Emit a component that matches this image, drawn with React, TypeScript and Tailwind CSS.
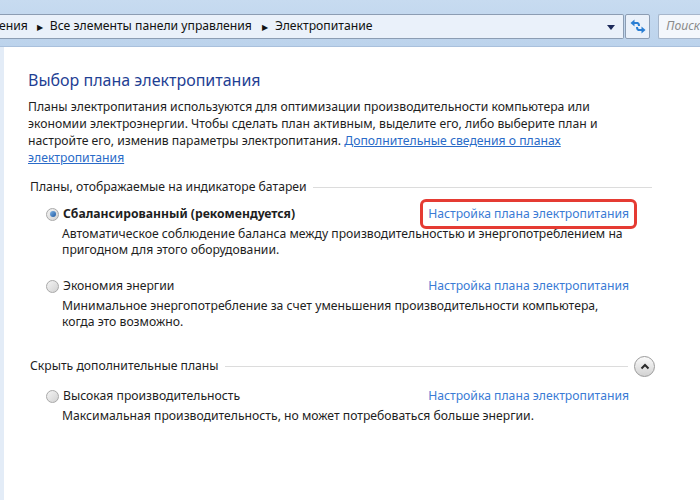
import React from "react";

const F = { fontFamily: '"Noto Sans", "Open Sans", sans-serif' };

function Radio({ checked }: { checked?: boolean }) {
  return (
    <span className="relative inline-flex w-[13px] h-[13px] rounded-full border border-[#a9a9a9] bg-gradient-to-br from-[#f4f4f4] to-[#d2d2d2] items-center justify-center shrink-0">
      {checked && (
        <span className="w-[6px] h-[6px] rounded-full bg-gradient-to-br from-[#7fb4e6] to-[#1d5aa3]" />
      )}
    </span>
  );
}

function Plan({
  title,
  bold,
  checked,
  desc,
  boxed,
}: {
  title: string;
  bold?: boolean;
  checked?: boolean;
  desc: React.ReactNode;
  boxed?: boolean;
}) {
  return (
    <div className="pl-[42px] pr-[71px]">
      <div className="flex items-center h-[18px]">
        <Radio checked={checked} />
        <span className={`ml-[4px] text-[12.2px] text-[#1e1e1e] whitespace-nowrap ${bold ? "font-bold" : ""}`}>{title}</span>
        <span className="flex-1" />
        <span className="relative text-[12.2px] text-[#3a7bd5] whitespace-nowrap">
          {boxed && (
            <span className="absolute left-[-8px] right-[-8px] top-[-6px] bottom-[-6px] border-[3px] border-[#e53b33] rounded-[6px]" />
          )}
          Настройка плана электропитания
        </span>
      </div>
      <div className="pl-[16px] mt-[3px] text-[12.2px] leading-[16px] text-[#1e1e1e] whitespace-nowrap">{desc}</div>
    </div>
  );
}

export default function App() {
  return (
    <div className="w-[700px] h-[500px] overflow-hidden bg-white relative" style={F}>
      {/* top band */}
      <div className="h-[47px] bg-gradient-to-b from-[#c7dbf0] to-[#bcd3ec] border-b border-[#a9c0dc] flex items-start pt-[14px]">
        <div className="h-[25px] w-[631px] flex items-center bg-[#eaf1fa] border border-[#8c9db3] border-l-0 rounded-r-[2px]">
          <span className="text-[12.2px] text-[#111] ml-[-1px]">ения</span>
          <span className="ml-[9px] text-[8px] text-[#111]">▶</span>
          <span className="ml-[7px] text-[12.2px] text-[#111] whitespace-nowrap">Все элементы панели управления</span>
          <span className="ml-[10px] text-[8px] text-[#111]">▶</span>
          <span className="ml-[7px] text-[12.2px] text-[#111]">Электропитание</span>
          <span className="flex-1" />
          <span className="mr-[8px] mt-[1px] w-0 h-0 border-l-[4px] border-r-[4px] border-t-[5px] border-l-transparent border-r-transparent border-t-[#1c2a5a]" />
        </div>
        <div className="h-[25px] w-[26px] ml-[1px] bg-[#eaf1fa] border border-[#8c9db3] rounded-[2px] flex items-center justify-center">
          <svg width="16" height="15" viewBox="0 0 16 15">
            <path d="M8 4 H3" stroke="#2a7fd4" strokeWidth="2" fill="none" />
            <path d="M0.5 4 L4.5 0.5 V7.5 Z" fill="#2a7fd4" />
            <path d="M7 4 Q9 4 9 7" stroke="#2a7fd4" strokeWidth="2" fill="none" />
            <path d="M8 11 H13" stroke="#2a7fd4" strokeWidth="2" fill="none" />
            <path d="M15.5 11 L11.5 7.5 V14.5 Z" fill="#2a7fd4" />
            <path d="M9 11 Q7 11 7 8" stroke="#2a7fd4" strokeWidth="2" fill="none" />
          </svg>
        </div>
        <div className="h-[25px] flex-1 ml-[8px] bg-[#f3f7fc] border border-[#a6b6cb] border-r-0 rounded-l-[2px] flex items-center pl-[7px]">
          <span className="text-[12.2px] italic text-[#8a8a8a]">Поиск</span>
        </div>
      </div>

      {/* content */}
      <div className="flex h-[453px]">
        <div className="w-[4px] bg-[#e3ecf7]" />
        <div className="flex-1">
          <div className="pl-[24px] pt-[22px] text-[16px] leading-[22px] text-[#1f3f94] whitespace-nowrap">Выбор плана электропитания</div>
          <div className="pl-[24px] mt-[7px] text-[12.2px] leading-[17px] text-[#1e1e1e] whitespace-nowrap">
            Планы электропитания используются для оптимизации производительности компьютера или
            <br />
            экономии электроэнергии. Чтобы сделать план активным, выделите его, либо выберите план и
            <br />
            настройте его, изменив параметры электропитания.{" "}
            <span className="text-[#2a6bc8] underline">Дополнительные сведения о планах</span>
            <br />
            <span className="text-[#2a6bc8] underline">электропитания</span>
          </div>

          <div className="mt-[12px] pl-[26px] pr-[48px] flex items-center h-[18px]">
            <span className="text-[12.2px] text-[#1e1e1e] whitespace-nowrap">Планы, отображаемые на индикаторе батареи</span>
            <span className="flex-1 ml-[6px] h-px bg-[#dcdcdc]" />
          </div>

          <div className="mt-[9px]">
            <Plan
              title="Сбалансированный (рекомендуется)"
              bold
              checked
              boxed
              desc={<>Автоматическое соблюдение баланса между производительностью и энергопотреблением на<br />пригодном для этого оборудовании.</>}
            />
          </div>
          <div className="mt-[19px]">
            <Plan
              title="Экономия энергии"
              desc={<>Минимальное энергопотребление за счет уменьшения производительности компьютера,<br />когда это возможно.</>}
            />
          </div>

          <div className="mt-[25px] pl-[26px] pr-[45px] flex items-center h-[22px]">
            <span className="text-[12.2px] text-[#1e1e1e] whitespace-nowrap">Скрыть дополнительные планы</span>
            <span className="flex-1 ml-[6px] mr-[6px] h-px bg-[#dcdcdc]" />
            <span className="w-[21px] h-[21px] rounded-full border border-[#9a9a9a] bg-gradient-to-b from-[#fbfbfb] to-[#d2d2d2] flex items-center justify-center">
              <svg width="10" height="7" viewBox="0 0 10 7">
                <path d="M1.5 5.5 L5 2 L8.5 5.5" stroke="#2b2b2b" strokeWidth="2" fill="none" />
              </svg>
            </span>
          </div>

          <div className="mt-[10px]">
            <Plan
              title="Высокая производительность"
              desc={<>Максимальная производительность, но может потребоваться больше энергии.</>}
            />
          </div>
        </div>
      </div>
    </div>
  );
}
